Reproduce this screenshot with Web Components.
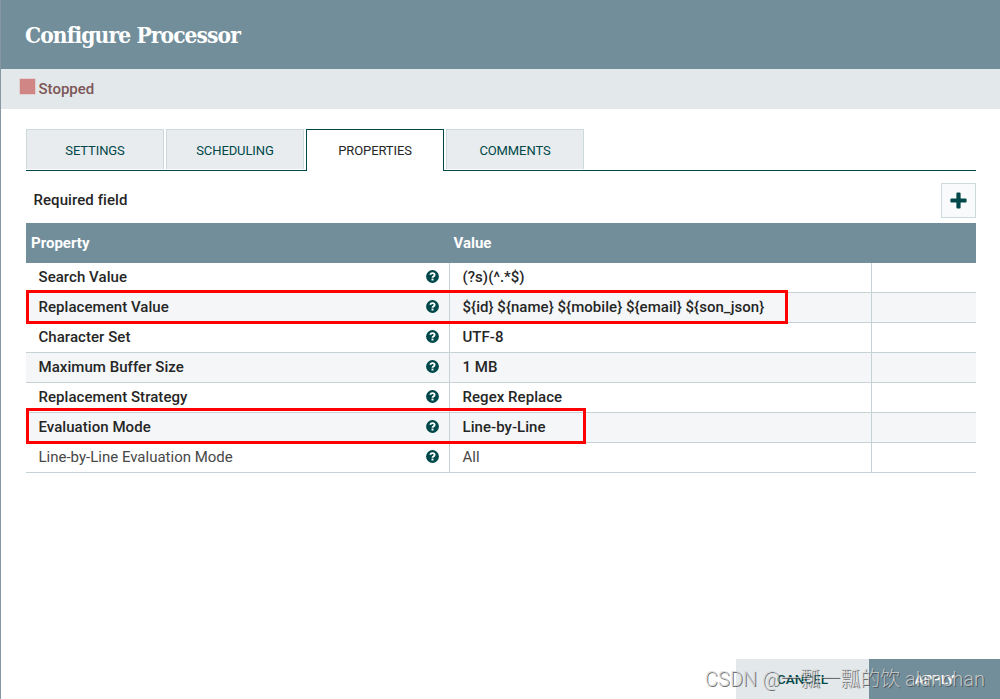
<!DOCTYPE html>
<html lang="en">
<head>
<meta charset="utf-8">
<title>Configure Processor</title>
<style>
  html, body {
    margin: 0;
    height: 100%;
    overflow: hidden;
    background: #fff;
    font-family: Roboto, "Liberation Sans", sans-serif;
  }
</style>
</head>
<body>
<processor-dialog>
  <span slot="title">Configure Processor</span>
  <run-status slot="status">Stopped</run-status>

  <tab-bar slot="tabs">
    <tab-item>SETTINGS</tab-item>
    <tab-item>SCHEDULING</tab-item>
    <tab-item selected>PROPERTIES</tab-item>
    <tab-item>COMMENTS</tab-item>
  </tab-bar>

  <property-toolbar>Required field</property-toolbar>

  <property-table>
    <property-row required name="Search Value">(?s)(^.*$)</property-row>
    <property-row required name="Replacement Value">${id} ${name} ${mobile} ${email} ${son_json}</property-row>
    <property-row required name="Character Set">UTF-8</property-row>
    <property-row required name="Maximum Buffer Size">1 MB</property-row>
    <property-row required name="Replacement Strategy">Regex Replace</property-row>
    <property-row required name="Evaluation Mode">Line-by-Line</property-row>
    <property-row name="Line-by-Line Evaluation Mode">All</property-row>
    <mark-box slot="marks" style="top: 67px; width: 756px; height: 28px"></mark-box>
    <mark-box slot="marks" style="top: 185px; width: 554px; height: 30px"></mark-box>
  </property-table>

  <dialog-button slot="actions">CANCEL</dialog-button>
  <dialog-button slot="actions" primary>APPLY</dialog-button>
  <water-mark slot="overlay">CSDN @一瓢一瓢的饮 alanchan</water-mark>
</processor-dialog>

<script>
/** Registers an element whose shadow root is filled from a markup string */
function define(name, html, setup) {
  const template = document.createElement("template");
  template.innerHTML = html;

  customElements.define(
    name,
    class extends HTMLElement {
      constructor() {
        super();
        this.attachShadow({ mode: "open" });
      }

      connectedCallback() {
        if (this.shadowRoot.firstChild) return;
        this.shadowRoot.appendChild(template.content.cloneNode(true));
        if (setup) setup(this, this.shadowRoot);
      }
    }
  );
}

define("processor-dialog", /*html*/ `
  <header><slot name="title"></slot></header>
  <div class="status"><slot name="status"></slot></div>
  <main>
    <slot name="tabs"></slot>
    <slot></slot>
  </main>
  <footer><slot name="actions"></slot></footer>
  <slot name="overlay"></slot>

  <style>
    :host {
      display: flex;
      flex-direction: column;
      position: relative;
      box-sizing: border-box;
      height: 699px;
      border-left: 1px solid #8497a3;
      background: #fff;
    }

    header {
      display: flex;
      align-items: center;
      box-sizing: border-box;
      height: 69px;
      padding-left: 24px;
      background: #728e9b;
      color: #fff;
      font: bold 22.5px/30px "Roboto Slab", "DejaVu Serif Condensed", "DejaVu Serif", serif;
      letter-spacing: -0.88px;
    }

    .status {
      height: 40px;
      background: #e3e8eb;
    }

    main {
      flex: 1;
      padding: 20px 24px 0 25px;
    }

    footer {
      display: flex;
      justify-content: flex-end;
      height: 40px;
    }
  </style>
`);

define("run-status", /*html*/ `
  <i></i><span><slot></slot></span>

  <style>
    :host {
      display: flex;
      gap: 3.5px;
      height: 40px;
      padding-left: 19px;
      color: #7d5757;
      font-size: 15px;
      font-weight: 500;
      line-height: 40px;
    }

    i {
      width: 15px;
      height: 15px;
      margin-top: 10px;
      background: #d18686;
      box-shadow: 0 0 0 0.5px #dfb9bb;
    }
  </style>
`);

define("tab-bar", /*html*/ `
  <slot></slot>

  <style>
    :host {
      display: flex;
      gap: 2px;
      height: 41px;
      border-bottom: 1px solid #004849;
    }
  </style>
`);

define("tab-item", /*html*/ `
  <slot></slot>

  <style>
    :host {
      box-sizing: border-box;
      width: 138px;
      height: 40px;
      border: 1px solid #ccdadb;
      border-bottom: 0;
      background: #e8ecef;
      color: #004849;
      font-size: 13px;
      letter-spacing: -0.1px;
      line-height: 42px;
      text-align: center;
    }

    /* covers the rule below the tabs */
    :host([selected]) {
      height: 42px;
      border-color: #004849;
      background: #fff;
      color: #262626;
    }
  </style>
`);

define("property-toolbar", /*html*/ `
  <span><slot></slot></span>
  <button aria-label="Add">
    <svg width="17" height="17" viewBox="0 0 17 17">
      <path fill="#004849" d="M7.4 .5h2.2q1 0 1 1v5h5q1 0 1 1v2q0 1-1 1h-5v5q0 1-1 1H7.4q-1 0-1-1v-5h-5q-1 0-1-1v-2q0-1 1-1h5v-5q0-1 1-1z"/>
    </svg>
  </button>

  <style>
    :host {
      display: flex;
      justify-content: space-between;
      height: 40px;
      padding: 12px 0 0 7.5px;
      color: #262626;
      font-size: 15px;
      font-weight: 500;
      letter-spacing: 0.07px;
      line-height: 34px;
    }

    button {
      display: grid;
      place-items: center;
      box-sizing: border-box;
      width: 35px;
      height: 35px;
      padding: 0;
      border: 1px solid #ccdadb;
      background: #f9fafb;
    }
  </style>
`);

define("property-table", /*html*/ `
  <div class="head"><span>Property</span><span>Value</span></div>
  <slot></slot>
  <slot name="marks"></slot>

  <style>
    :host {
      display: block;
      position: relative;
    }

    .head {
      display: grid;
      grid-template-columns: 422.5px 1fr;
      height: 40px;
      padding-left: 5px;
      background: #728e9b;
      color: #fff;
      font-size: 15px;
      font-weight: 700;
      line-height: 40px;
    }

    ::slotted(property-row:nth-of-type(even)) {
      background: #f4f6f8;
    }
  </style>
`);

define("property-row", /*html*/ `
  <div class="name">
    <span></span>
    <svg width="13" height="13" viewBox="0 0 13 13">
      <circle cx="6.5" cy="6.5" r="6.4" fill="#004849"/>
      <path fill="none" stroke="#fff" stroke-width="1.9" d="M4.2 4.8Q4.8 3.1 6.5 3.1q2.1 0 2.1 1.6 0 1-1.1 1.6-1 .5-1 1.4"/>
      <path fill="#fff" d="M5.5 8.6h2v1.9h-2z"/>
    </svg>
  </div>
  <div class="value"><slot></slot></div>
  <div></div>

  <style>
    :host {
      display: grid;
      grid-template-columns: 424px 422px 1fr;
      box-sizing: border-box;
      height: 30px;
      border-bottom: 1px solid #c7d2d7;
      color: #484848;
      font-size: 15px;
      line-height: 28px;
      white-space: nowrap;
    }

    :host([required]) {
      color: #262626;
      font-weight: 500;
      letter-spacing: 0.05px;
    }

    .name, .value {
      border-right: 1px solid #c7d2d7;
    }

    .name {
      display: flex;
      justify-content: space-between;
      padding: 0 10.5px 0 12.5px;
    }

    .value {
      padding-left: 12.5px;
    }

    svg {
      margin-top: 7px;
    }
  </style>
`, (el, root) => {
  root.querySelector(".name span").textContent = el.getAttribute("name");
});

define("mark-box", /*html*/ `
  <style>
    :host {
      position: absolute;
      left: 0;
      border: 3px solid #f00;
    }
  </style>
`);

define("dialog-button", /*html*/ `
  <slot></slot>

  <style>
    :host {
      width: 133px;
      background: #e3e8eb;
      color: #004849;
      font-size: 13.5px;
      font-weight: 500;
      line-height: 41px;
      text-align: center;
    }

    :host([primary]) {
      width: 131px;
      background: #728e9b;
      color: #fff;
    }
  </style>
`);

define("water-mark", /*html*/ `
  <slot></slot>

  <style>
    :host {
      position: absolute;
      right: 15px;
      bottom: 7px;
      color: rgba(215, 215, 215, 0.8);
      font: 300 20px/26px Roboto, "Noto Sans CJK SC", sans-serif;
      text-shadow: 1px 1px 0.5px rgba(70, 70, 70, 0.75);
      white-space: nowrap;
    }
  </style>
`);
</script>
</body>
</html>
